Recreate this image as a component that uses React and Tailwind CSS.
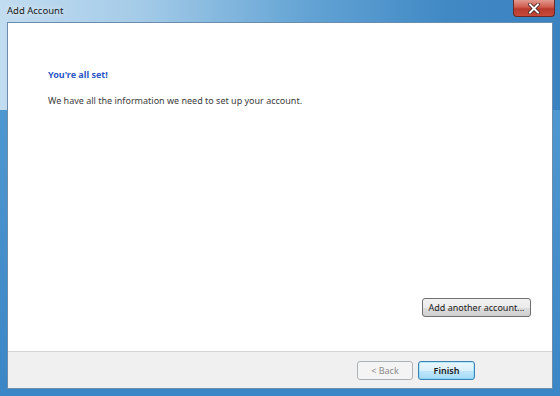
import React from "react";

export default function App() {
  return (
    <div
      className="relative w-[560px] h-[396px] flex flex-col overflow-hidden"
      style={{ fontFamily: '"Noto Sans", "Open Sans", sans-serif' }}
    >
      <div className="absolute inset-0 bg-[linear-gradient(to_right,#c2dcf0_0%,#a4cbe8_25%,#63a3d4_55%,#4089c5_80%,#3a82c0_100%)]" />
      <div className="absolute left-0 right-0 top-[110px] bottom-0 bg-[linear-gradient(to_bottom,#4f97cf,#3b86c6)]" />
      <div className="relative h-[22px] flex items-center pl-[7px] text-[9.5px] text-[#1b1b1b] [text-shadow:0_0_6px_rgba(255,255,255,0.9)]">
        Add Account
      </div>
      <div className="absolute top-0 right-[5px] w-[42px] h-[17px] rounded-b-[4px] border border-t-0 border-[#6a2a25] bg-[linear-gradient(to_bottom,#e29a8f_0%,#cf5a4c_45%,#b83a2c_55%,#c6493a_100%)] flex items-center justify-center">
        <svg width="12" height="11" viewBox="0 0 12 11">
          <path d="M2 1.5 L10 9.5 M10 1.5 L2 9.5" stroke="#3a1a18" strokeWidth="3.6" strokeLinecap="square" />
          <path d="M2 1.5 L10 9.5 M10 1.5 L2 9.5" stroke="#ffffff" strokeWidth="2" strokeLinecap="square" />
        </svg>
      </div>
      <div className="relative flex-1 mx-[7px] mb-[7px] border border-[#6d8bab] bg-white flex flex-col">
        <div className="flex-1 flex flex-col pl-[40px] pr-[21px] pt-[44px] pb-[34px]">
          <div className="text-[9px] font-bold text-[#2c56c8] leading-[16px]">You're all set!</div>
          <div className="mt-[10px] text-[9px] text-[#3c3c3c] leading-[16px]">
            We have all the information we need to set up your account.
          </div>
          <div className="flex-1" />
          <div className="flex justify-end">
            <button className="h-[19px] w-[109px] whitespace-nowrap rounded-[3px] border border-[#707070] bg-[linear-gradient(to_bottom,#f2f2f2_0%,#ebebeb_50%,#dddddd_51%,#cfcfcf_100%)] text-[9px] text-[#1a1a1a] leading-none">
              Add another account...
            </button>
          </div>
        </div>
        <div className="h-[37px] border-t border-[#d5d5d5] bg-[#f0f0f0] flex items-center justify-end pr-[77px] gap-[5px]">
          <button className="h-[19px] w-[56px] rounded-[3px] border border-[#adb2b5] bg-[#f4f4f4] text-[9px] text-[#8a8a8a] leading-none">
            &lt; Back
          </button>
          <button className="h-[19px] w-[57px] rounded-[3px] border border-[#3c7fb1] bg-[linear-gradient(to_bottom,#eaf6fd_0%,#d9f0fc_50%,#bee6fd_51%,#a7d9f5_100%)] shadow-[inset_0_0_0_1px_#48d6fc55] text-[9px] font-semibold text-[#1a1a1a] leading-none">
            Finish
          </button>
        </div>
      </div>
    </div>
  );
}
